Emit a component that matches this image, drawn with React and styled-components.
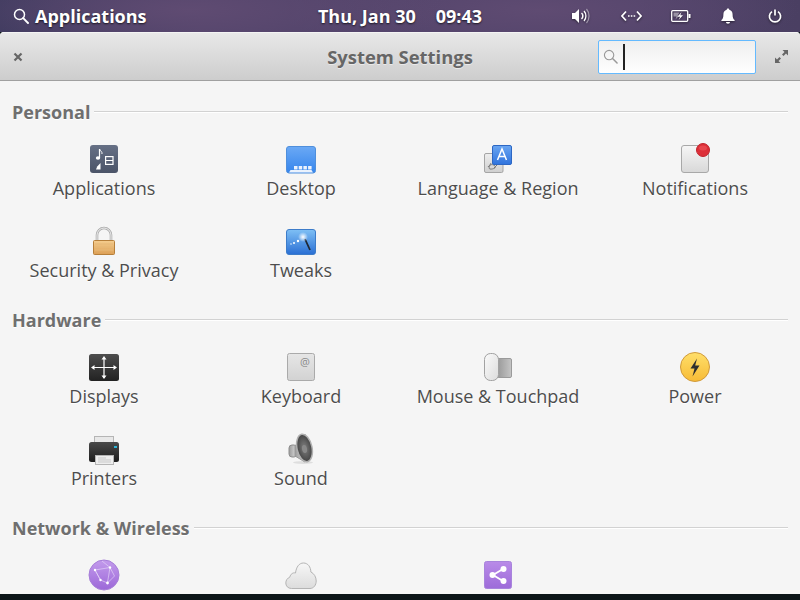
import React from 'react';
import styled, { createGlobalStyle } from 'styled-components';

const Global = createGlobalStyle`
  html, body { margin: 0; padding: 0; width: 800px; height: 600px; overflow: hidden; background: #0c1518; }
  * { box-sizing: border-box; }
`;

const Desktop = styled.div`
  width: 800px;
  height: 600px;
  display: flex;
  flex-direction: column;
  font-family: "Open Sans", sans-serif;
  overflow: hidden;
`;

const Panel = styled.div`
  height: 32px;
  flex: none;
  display: grid;
  grid-template-columns: 1fr auto 1fr;
  align-items: center;
  color: #fff;
  font-weight: 700;
  font-size: 18px;
  text-shadow: 0 1px 2px rgba(0, 0, 0, 0.7);
  background:
    radial-gradient(ellipse 260px 50px at 190px 10px, #5f4b72, transparent),
    radial-gradient(ellipse 260px 50px at 540px 10px, #5f4b72, transparent),
    linear-gradient(90deg, #3d3a5e 0%, #4f4269 25%, #4f4269 80%, #4a3f62 100%);
`;

const PanelLeft = styled.div`
  display: flex;
  align-items: center;
  gap: 6px;
  padding-left: 13px;
`;

const Clock = styled.div`
  display: flex;
  gap: 20px;
`;

const PanelRight = styled.div`
  display: flex;
  justify-content: flex-end;
  align-items: center;
  padding-right: 2px;
`;

const Indicator = styled.div`
  width: ${(p) => p.$w}px;
  display: flex;
  justify-content: center;
  filter: drop-shadow(0 1px 1px rgba(0, 0, 0, 0.5));
`;

const Window = styled.div`
  flex: 1;
  display: flex;
  flex-direction: column;
  min-height: 0;
  margin-bottom: 6px;
  background: #f5f5f5;
  border-radius: 4px 4px 0 0;
  overflow: hidden;
`;

const HeaderBar = styled.div`
  height: 49px;
  flex: none;
  display: grid;
  grid-template-columns: 1fr auto 1fr;
  align-items: center;
  padding: 0 12px;
  background: linear-gradient(#e8e8e8, #cdcdcd);
  border-top: 1px solid #f4f4f4;
  border-bottom: 1px solid #a0a0a0;
`;

const Title = styled.div`
  font-size: 18.4px;
  font-weight: 700;
  color: #666;
  text-shadow: 0 1px 0 rgba(255, 255, 255, 0.5);
`;

const HeaderRight = styled.div`
  display: flex;
  justify-content: flex-end;
  align-items: center;
  gap: 19px;
`;

const SearchEntry = styled.div`
  width: 158px;
  height: 34px;
  display: flex;
  align-items: center;
  gap: 5px;
  padding-left: 4px;
  border: 1px solid #64baff;
  border-radius: 2px;
  background: linear-gradient(#efefef, #fff);
`;

const Caret = styled.div`
  width: 2px;
  height: 26px;
  background: #222;
`;

const Content = styled.div`
  flex: 1;
  min-height: 0;
  overflow: hidden;
  padding: 18px 12px 0 12px;
`;

const Section = styled.section`
  margin-bottom: 2px;
`;

const SectionHead = styled.div`
  display: flex;
  align-items: center;
  gap: 4px;
  height: 26px;
  font-size: 18px;
  font-weight: 700;
  color: #6f6f6f;
  text-shadow: 0 1px 0 #fff;
`;

const Rule = styled.div`
  flex: 1;
  height: 2px;
  border-top: 1px solid #d2d2d2;
  border-bottom: 1px solid #fff;
`;

const Grid = styled.div`
  display: grid;
  grid-template-columns: repeat(4, 197px);
  grid-auto-rows: 82px;
  margin: 16px 0 0 -6.5px;
`;

const Item = styled.div`
  display: flex;
  flex-direction: column;
  align-items: center;
  padding-top: 2px;
`;

const IconBox = styled.div`
  width: 32px;
  height: 32px;
  display: flex;
`;

const Label = styled.div`
  margin-top: 1px;
  font-size: 18px;
  line-height: 24px;
  color: #4d4d4d;
  white-space: nowrap;
  text-shadow: 0 1px 0 #fff;
`;

const SearchGlyph = ({ size = 16, color = '#fff', sw = 1.5 }) => (
  <svg width={size} height={size} viewBox="0 0 16 16" fill="none" stroke={color} strokeWidth={sw}>
    <circle cx="6.5" cy="6.5" r="5" />
    <path d="M10.2 10.2 15 15" strokeWidth={sw + 0.4} strokeLinecap="round" />
  </svg>
);

const VolumeIcon = () => (
  <svg width="20" height="16" viewBox="0 0 20 16" fill="none">
    <path d="M1 5h3l4-4v14l-4-4H1z" fill="#fff" />
    <path d="M10.5 5a4 4 0 0 1 0 6" stroke="#fff" strokeWidth="1.5" />
    <path d="M13 3a7.5 7.5 0 0 1 0 10" stroke="#fff" strokeWidth="1.3" />
    <path d="M15.5 1a11 11 0 0 1 0 14" stroke="#fff" strokeOpacity="0.45" strokeWidth="1.2" />
  </svg>
);

const NetworkIcon = () => (
  <svg width="21" height="12" viewBox="0 0 21 12" fill="none" stroke="#fff" strokeWidth="1.7">
    <path d="M5 1.5 1 6l4 4.5M16 1.5 20 6l-4 4.5" />
    <path d="M7 6h1.6M9.8 6h1.6M12.6 6h1.6" strokeWidth="1.6" />
  </svg>
);

const BatteryIcon = () => (
  <svg width="20" height="12" viewBox="0 0 20 12" fill="none">
    <rect x="0.7" y="0.7" width="16" height="10.6" rx="1" stroke="#fff" strokeWidth="1.3" />
    <rect x="17.5" y="4" width="2" height="4" fill="#fff" />
    <path d="M2.5 2.5h6l-2 3h2l-4 4 1-3H2.5z" fill="#fff" fillOpacity="0.45" />
    <path d="M10.5 2 6.5 6.7h2.6L7.600 10l4.400-4.700H9.300z" fill="#fff" />
  </svg>
);

const BellIcon = () => (
  <svg width="14" height="16" viewBox="0 0 14 16" fill="#fff">
    <path d="M7 0.5c.8 0 1.300.5 1.300 1.200C10.600 2.300 11.600 4 11.600 6.500c0 3 .6 4.400 2 5.600v1H.4v-1c1.400-1.200 2-2.600 2-5.600 0-2.500 1-4.200 3.300-4.800C5.700 1 6.200.5 7 .5z" />
    <path d="M5 14h4c0 1-.9 1.700-2 1.700S5 15 5 14z" />
  </svg>
);

const PowerIcon = () => (
  <svg width="14" height="14" viewBox="0 0 14 14" fill="none" stroke="#fff" strokeWidth="1.7">
    <path d="M4 2.600a5.600 5.600 0 1 0 6 0" />
    <path d="M7 .5v6" />
  </svg>
);

const CloseGlyph = () => (
  <svg width="12" height="12" viewBox="0 0 12 12" stroke="#666" strokeWidth="2.2">
    <path d="M2.500 2.500l7 7M9.500 2.500l-7 7" />
  </svg>
);

const ExpandGlyph = () => (
  <svg width="13" height="13" viewBox="0 0 13 13" fill="#666">
    <path d="M13 0v5.500l-2-2-2.500 2.500-1.500-1.500L9.500 2 7.500 0z" />
    <path d="M0 13V7.500l2 2L4.500 7 6 8.500 3.500 11l2 2z" />
  </svg>
);

const AppsIcon = () => (
  <svg width="32" height="32" viewBox="0 0 32 32">
    <defs>
      <linearGradient id="apg" x1="0" y1="0" x2="0" y2="1">
        <stop offset="0" stopColor="#667085" />
        <stop offset="1" stopColor="#4b5468" />
      </linearGradient>
    </defs>
    <rect x="2" y="2" width="28" height="28" rx="3" fill="url(#apg)" />
    <path d="M11.500 6v9" stroke="#fff" strokeWidth="1.200" />
    <path d="M11.500 6c.5 2 3 2.500 2.500 5" stroke="#fff" strokeWidth="1" fill="none" />
    <ellipse cx="10" cy="15" rx="2.200" ry="1.700" fill="#fff" />
    <path d="M12.500 20v6.500H8l1.200-3z" fill="#fff" />
    <rect x="17.600" y="13.600" width="7.400" height="7.800" fill="none" stroke="#fff" strokeWidth="1.200" />
    <path d="M18 17.500h7" stroke="#fff" strokeWidth="1.200" />
  </svg>
);

const DesktopIcon = () => (
  <svg width="32" height="32" viewBox="0 0 32 32">
    <defs>
      <linearGradient id="dkg" x1="0" y1="0" x2="0" y2="1">
        <stop offset="0" stopColor="#6ba9f5" />
        <stop offset="1" stopColor="#3585ec" />
      </linearGradient>
    </defs>
    <rect x="1.500" y="3.500" width="29" height="26.500" rx="2.500" fill="url(#dkg)" stroke="#4f8fdc" />
    <path d="M4 29.500l1.500-2.500h21l1.500 2.500z" fill="#eaf2fd" />
    <path d="M9 23h3.500v3.500H9zM13.700 23h3.500v3.500h-3.500zM18.400 23h3.500v3.500h-3.500zM23.100 23h3.500v3.500h-3.500z" fill="#eaf2fd" />
  </svg>
);

const LanguageIcon = () => (
  <svg width="32" height="32" viewBox="0 0 32 32">
    <defs>
      <linearGradient id="lgg" x1="0" y1="0" x2="0" y2="1">
        <stop offset="0" stopColor="#6aa6f2" />
        <stop offset="1" stopColor="#2f73dd" />
      </linearGradient>
      <linearGradient id="lgw" x1="0" y1="0" x2="0" y2="1">
        <stop offset="0" stopColor="#eeeeee" />
        <stop offset="1" stopColor="#cfcfcf" />
      </linearGradient>
    </defs>
    <rect x="2.500" y="10.500" width="18.500" height="19" rx="1.500" fill="url(#lgw)" stroke="#a5a5a5" />
    <path d="M6 24c2-3 5-3 7-1s-3 3.500-5 3 0-4 1-6M12 25l3-3" stroke="#777" strokeWidth="1" fill="none" />
    <rect x="10.500" y="2.500" width="19" height="19" rx="1.500" fill="url(#lgg)" stroke="#2d67c4" />
    <path d="M15.500 17l4.500-11 4.500 11M17 13.500h6" stroke="#fff" strokeWidth="1.500" fill="none" />
  </svg>
);

const NotificationsIcon = () => (
  <svg width="32" height="32" viewBox="0 0 32 32">
    <defs>
      <linearGradient id="ntg" x1="0" y1="0" x2="0" y2="1">
        <stop offset="0" stopColor="#f6f6f6" />
        <stop offset="1" stopColor="#d8d8d8" />
      </linearGradient>
    </defs>
    <rect x="2.500" y="2.500" width="27" height="27" rx="2.500" fill="url(#ntg)" stroke="#a8a8a8" />
    <circle cx="24" cy="7" r="6.500" fill="#dc2f38" stroke="#c0242d" />
    <ellipse cx="24" cy="5" rx="4" ry="2.500" fill="#e8474e" />
  </svg>
);

const LockIcon = () => (
  <svg width="32" height="32" viewBox="0 0 32 32">
    <defs>
      <linearGradient id="lkg" x1="0" y1="0" x2="0" y2="1">
        <stop offset="0" stopColor="#f5cd8f" />
        <stop offset="1" stopColor="#dc9f55" />
      </linearGradient>
    </defs>
    <path d="M9 16V10a7 7 0 0 1 14 0v6" fill="none" stroke="#aaa" strokeWidth="2.600" />
    <path d="M9 16V10a7 7 0 0 1 14 0v6" fill="none" stroke="#eee" strokeWidth="1" />
    <rect x="5.500" y="15.500" width="21" height="14" rx="1" fill="url(#lkg)" stroke="#b67f3a" />
    <path d="M7 19h18M7 22h18M7 25h18" stroke="#e6b877" strokeWidth="1" />
  </svg>
);

const TweaksIcon = () => (
  <svg width="32" height="32" viewBox="0 0 32 32">
    <defs>
      <linearGradient id="twg" x1="0" y1="0" x2="0" y2="1">
        <stop offset="0" stopColor="#7fc0f5" />
        <stop offset="1" stopColor="#2a6fd4" />
      </linearGradient>
      <radialGradient id="twh">
        <stop offset="0" stopColor="#fff" />
        <stop offset="1" stopColor="#fff" stopOpacity="0" />
      </radialGradient>
    </defs>
    <rect x="1.500" y="4.500" width="29" height="25" rx="2.500" fill="url(#twg)" stroke="#3d7cc9" />
    <path d="M20 14l5 11" stroke="#1f2733" strokeWidth="1.800" />
    <circle cx="18" cy="12" r="5" fill="url(#twh)" />
    <circle cx="13" cy="16" r="1.200" fill="#fff" />
    <circle cx="9" cy="18" r="1" fill="#fff" />
    <circle cx="6" cy="19" r=".7" fill="#fff" />
  </svg>
);

const DisplaysIcon = () => (
  <svg width="32" height="32" viewBox="0 0 32 32">
    <defs>
      <linearGradient id="dpg" x1="0" y1="0" x2="0" y2="1">
        <stop offset="0" stopColor="#4d4d4d" />
        <stop offset="1" stopColor="#222" />
      </linearGradient>
    </defs>
    <rect x="1" y="3" width="30" height="27" rx="2.500" fill="url(#dpg)" />
    <path d="M16 7v20M5 16.500h22" stroke="#fff" strokeWidth="1.200" />
    <path d="M16 5l2.500 3.500h-5zM16 28l2.500-3.500h-5zM3 16.500l3.500-2.500v5zM29 16.500l-3.500-2.500v5z" fill="#fff" />
  </svg>
);

const KeyText = styled.text`
  font-family: "Open Sans", sans-serif;
  font-size: 11px;
  fill: #8a8a8a;
  text-anchor: middle;
`;

const KeyboardIcon = () => (
  <svg width="32" height="32" viewBox="0 0 32 32">
    <defs>
      <linearGradient id="kbg" x1="0" y1="0" x2="0" y2="1">
        <stop offset="0" stopColor="#e6e6e6" />
        <stop offset="1" stopColor="#d2d2d2" />
      </linearGradient>
    </defs>
    <rect x="2.500" y="2.500" width="27" height="27" rx="2" fill="url(#kbg)" stroke="#aaa" />
    <KeyText x="20" y="15">@</KeyText>
  </svg>
);

const MouseIcon = () => (
  <svg width="32" height="32" viewBox="0 0 32 32">
    <defs>
      <linearGradient id="msg" x1="0" y1="0" x2="1" y2="1">
        <stop offset="0" stopColor="#fafafa" />
        <stop offset="1" stopColor="#dcdcdc" />
      </linearGradient>
      <linearGradient id="mtg" x1="0" y1="0" x2="1" y2="0">
        <stop offset="0" stopColor="#999" />
        <stop offset="1" stopColor="#c5c5c5" />
      </linearGradient>
    </defs>
    <rect x="15.500" y="7.500" width="14" height="19" rx="1.500" fill="url(#mtg)" stroke="#9a9a9a" />
    <rect x="2.500" y="2.500" width="14" height="27" rx="6" fill="url(#msg)" stroke="#a2a2a2" />
  </svg>
);

const PowerBoltIcon = () => (
  <svg width="32" height="32" viewBox="0 0 32 32">
    <defs>
      <linearGradient id="pwg" x1="0" y1="0" x2="0" y2="1">
        <stop offset="0" stopColor="#ffdf6a" />
        <stop offset="1" stopColor="#f7bb36" />
      </linearGradient>
    </defs>
    <circle cx="16" cy="16" r="14.500" fill="url(#pwg)" stroke="#d09a3c" />
    <path d="M18 7.500l-6.500 10h4L13.500 25.500 20.500 14.500h-4.300z" fill="#2f2f2f" />
  </svg>
);

const PrinterIcon = () => (
  <svg width="32" height="32" viewBox="0 0 32 32">
    <defs>
      <linearGradient id="prg" x1="0" y1="0" x2="0" y2="1">
        <stop offset="0" stopColor="#4a4a4a" />
        <stop offset="1" stopColor="#1e1e1e" />
      </linearGradient>
    </defs>
    <rect x="6.500" y="3.500" width="19" height="10" fill="#e8e8e8" stroke="#b5b5b5" />
    <rect x="1" y="9" width="30" height="20" rx="2.500" fill="url(#prg)" />
    <rect x="26" y="13" width="3" height="2" fill="#2bb5d8" />
    <rect x="7.500" y="22.500" width="18" height="9" fill="#eee" stroke="#b5b5b5" />
    <path d="M10 25h8M10 27h13M10 29h13" stroke="#c9c9c9" strokeWidth="1" />
  </svg>
);

const SoundIcon = () => (
  <svg width="32" height="32" viewBox="0 0 32 32">
    <defs>
      <linearGradient id="sdg" x1="0" y1="0" x2="1" y2="0">
        <stop offset="0" stopColor="#9a9a9a" />
        <stop offset="1" stopColor="#e2e2e2" />
      </linearGradient>
      <radialGradient id="sdc">
        <stop offset="0" stopColor="#808080" />
        <stop offset="1" stopColor="#444" />
      </radialGradient>
    </defs>
    <ellipse cx="18" cy="29.500" rx="10" ry="1.500" fill="#dedede" />
    <rect x="4" y="12" width="8" height="12" rx="3" fill="url(#sdg)" stroke="#8d8d8d" />
    <path d="M10 13 20 1v28L10 23z" fill="url(#sdg)" stroke="#999" />
    <ellipse cx="19.500" cy="15" rx="7.500" ry="14" transform="rotate(-12 19.500 15)" fill="url(#sdc)" stroke="#b0b0b0" strokeWidth="1.500" />
    <ellipse cx="19.500" cy="16" rx="2.500" ry="4" transform="rotate(-12 19.500 16)" fill="#888" />
  </svg>
);

const GlobeIcon = () => (
  <svg width="32" height="32" viewBox="0 0 32 32">
    <defs>
      <linearGradient id="glg" x1="0" y1="0" x2="0" y2="1">
        <stop offset="0" stopColor="#c39bec" />
        <stop offset="1" stopColor="#9c68d8" />
      </linearGradient>
    </defs>
    <circle cx="16" cy="16" r="15" fill="url(#glg)" stroke="#a77fd8" />
    <path d="M7 11l15-2.500 4.500 8.500-7 7-7-3zM7 11l5.500 10M22 8.500l-2.500 15M22 8.500L14 2" stroke="#e9dcf8" strokeWidth=".6" fill="none" />
    <circle cx="7" cy="11" r="1.200" fill="#fff" />
    <circle cx="22" cy="8.500" r="1.200" fill="#fff" />
    <circle cx="12.500" cy="21" r="1.200" fill="#fff" />
    <circle cx="19.500" cy="24" r="1.400" fill="#fff" />
  </svg>
);

const CloudIcon = () => (
  <svg width="32" height="32" viewBox="0 0 32 32">
    <defs>
      <linearGradient id="clg" x1="0" y1="0" x2="0" y2="1">
        <stop offset="0" stopColor="#f7f7f7" />
        <stop offset="1" stopColor="#dcdcdc" />
      </linearGradient>
    </defs>
    <path d="M6.500 29.500C3 29.500.8 27 .8 24c0-2.800 1.700-5 4-5.800C5.500 15 8 13.300 10.500 14c.8-6 3.500-10 8-10 4.500 0 7.200 4 7.400 9 3.200 1.500 5.300 5 5.300 9 0 4-2.500 7.500-6.200 7.500z" fill="url(#clg)" stroke="#b4b4b4" />
  </svg>
);

const ShareIcon = () => (
  <svg width="32" height="32" viewBox="0 0 32 32">
    <defs>
      <linearGradient id="shg" x1="0" y1="0" x2="0" y2="1">
        <stop offset="0" stopColor="#b98be8" />
        <stop offset="1" stopColor="#9d6bd9" />
      </linearGradient>
    </defs>
    <rect x="2.500" y="2.500" width="27" height="27" rx="2" fill="url(#shg)" stroke="#a884dc" />
    <path d="M21 10l-10 6 10 6" stroke="#fff" strokeWidth="1.800" fill="none" />
    <circle cx="21.500" cy="10" r="3" fill="#fff" />
    <circle cx="10.500" cy="16" r="3" fill="#fff" />
    <circle cx="21.500" cy="22" r="3" fill="#fff" />
  </svg>
);

const sections = [
  {
    name: 'Personal',
    items: [
      ['Applications', AppsIcon],
      ['Desktop', DesktopIcon],
      ['Language & Region', LanguageIcon],
      ['Notifications', NotificationsIcon],
      ['Security & Privacy', LockIcon],
      ['Tweaks', TweaksIcon],
    ],
  },
  {
    name: 'Hardware',
    items: [
      ['Displays', DisplaysIcon],
      ['Keyboard', KeyboardIcon],
      ['Mouse & Touchpad', MouseIcon],
      ['Power', PowerBoltIcon],
      ['Printers', PrinterIcon],
      ['Sound', SoundIcon],
    ],
  },
  {
    name: 'Network & Wireless',
    items: [
      ['', GlobeIcon],
      ['', CloudIcon],
      ['', ShareIcon],
    ],
  },
];

export default function App() {
  return (
    <Desktop>
      <Global />
      <Panel>
        <PanelLeft>
          <SearchGlyph />
          <span>Applications</span>
        </PanelLeft>
        <Clock>
          <span>Thu, Jan 30</span>
          <span>09:43</span>
        </Clock>
        <PanelRight>
          <Indicator $w={50}><VolumeIcon /></Indicator>
          <Indicator $w={51}><NetworkIcon /></Indicator>
          <Indicator $w={48}><BatteryIcon /></Indicator>
          <Indicator $w={46}><BellIcon /></Indicator>
          <Indicator $w={47}><PowerIcon /></Indicator>
        </PanelRight>
      </Panel>
      <Window>
        <HeaderBar>
          <div><CloseGlyph /></div>
          <Title>System Settings</Title>
          <HeaderRight>
            <SearchEntry>
              <SearchGlyph size={15} color="#999" sw={1.2} />
              <Caret />
            </SearchEntry>
            <ExpandGlyph />
          </HeaderRight>
        </HeaderBar>
        <Content>
          {sections.map((s) => (
            <Section key={s.name}>
              <SectionHead>
                <span>{s.name}</span>
                <Rule />
              </SectionHead>
              <Grid>
                {s.items.map(([label, Icon], i) => (
                  <Item key={i}>
                    <IconBox><Icon /></IconBox>
                    {label && <Label>{label}</Label>}
                  </Item>
                ))}
              </Grid>
            </Section>
          ))}
        </Content>
      </Window>
    </Desktop>
  );
}
